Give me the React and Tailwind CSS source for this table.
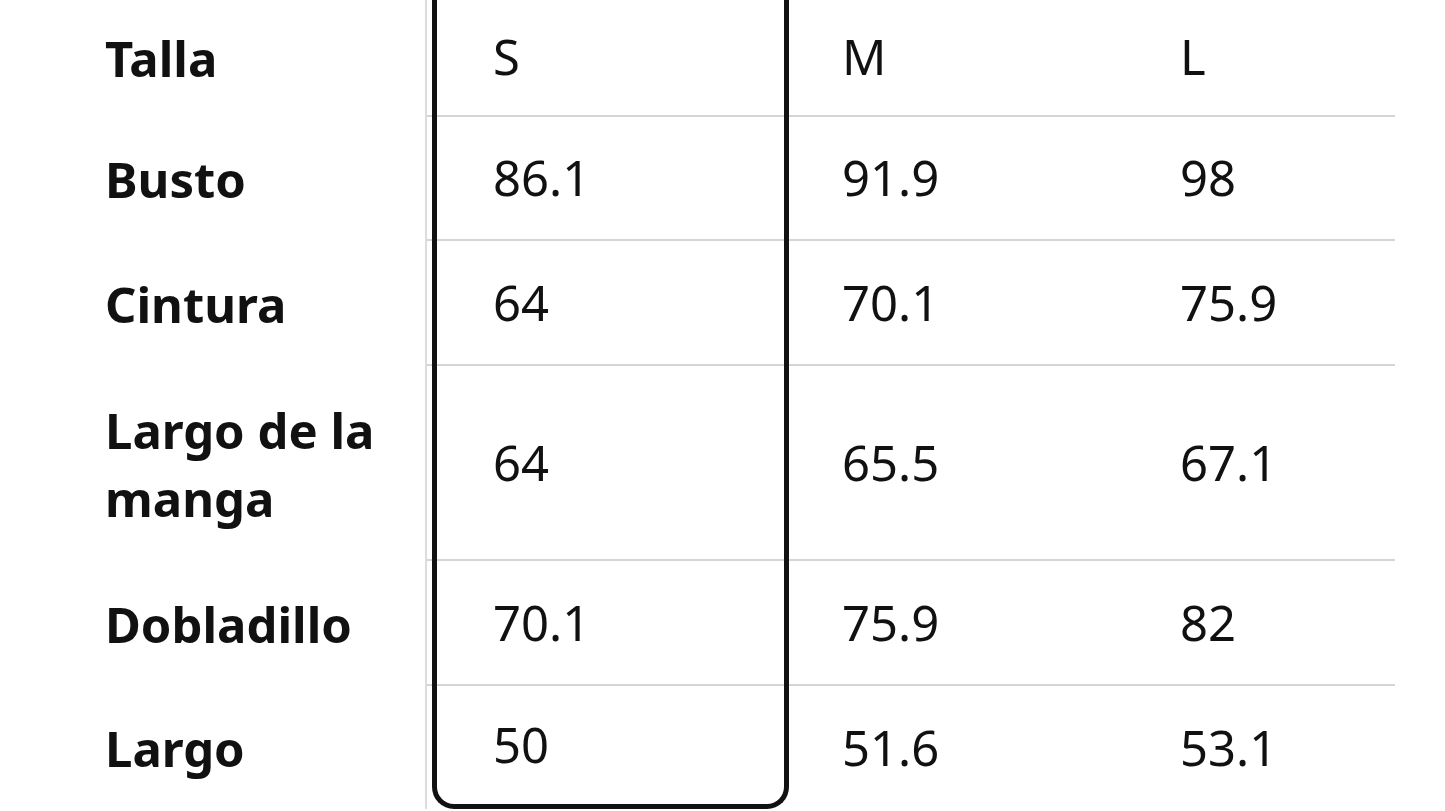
import React from "react";

const rows = [
  { label: "Talla", s: "S", m: "M", l: "L", h: "h-[119px]" },
  { label: "Busto", s: "86.1", m: "91.9", l: "98", h: "h-[124px]" },
  { label: "Cintura", s: "64", m: "70.1", l: "75.9", h: "h-[125px]" },
  { label: "Largo de la manga", s: "64", m: "65.5", l: "67.1", h: "h-[195px]" },
  { label: "Dobladillo", s: "70.1", m: "75.9", l: "82", h: "h-[125px]" },
  { label: "Largo", s: "50", m: "51.6", l: "53.1", h: "h-[123px]" },
];

const font = { fontFamily: "'Noto Sans', Roboto, sans-serif" };

export default function App() {
  return (
    <div className="w-[1445px] h-[811px] overflow-hidden bg-white text-[#111111]" style={font}>
      <div className="flex -mt-[2px]">
        <div className="w-[427px] border-r-2 border-[#dcdcdc] pl-[105px]">
          {rows.map((r, i) => (
            <div key={i} className={`${r.h} flex items-center pr-[30px] text-[49px] font-bold leading-[68px]`}>
              {r.label}
            </div>
          ))}
        </div>
        <div className="w-[5px] flex flex-col">
          {rows.map((r, i) => (
            <div key={i} className={`${r.h} ${i < rows.length - 1 ? "border-b-2 border-[#d5d5d5]" : ""}`} />
          ))}
        </div>
        <div className="w-[357px] border-x-[5px] border-b-[5px] border-[#111111] rounded-b-[22px] flex flex-col">
          {rows.map((r, i) => (
            <div
              key={i}
              className={`${i < rows.length - 1 ? r.h + " border-b-2 border-[#d5d5d5]" : "h-[118px]"} flex items-center pl-[56px] text-[49px]`}
            >
              {r.s}
            </div>
          ))}
        </div>
        <div className="w-[336px] flex flex-col">
          {rows.map((r, i) => (
            <div
              key={i}
              className={`${r.h} ${i < rows.length - 1 ? "border-b-2 border-[#d5d5d5]" : ""} flex items-center pl-[53px] text-[49px]`}
            >
              {r.m}
            </div>
          ))}
        </div>
        <div className="w-[270px] flex flex-col">
          {rows.map((r, i) => (
            <div
              key={i}
              className={`${r.h} ${i < rows.length - 1 ? "border-b-2 border-[#d5d5d5]" : ""} flex items-center pl-[55px] text-[49px]`}
            >
              {r.l}
            </div>
          ))}
        </div>
      </div>
    </div>
  );
}
